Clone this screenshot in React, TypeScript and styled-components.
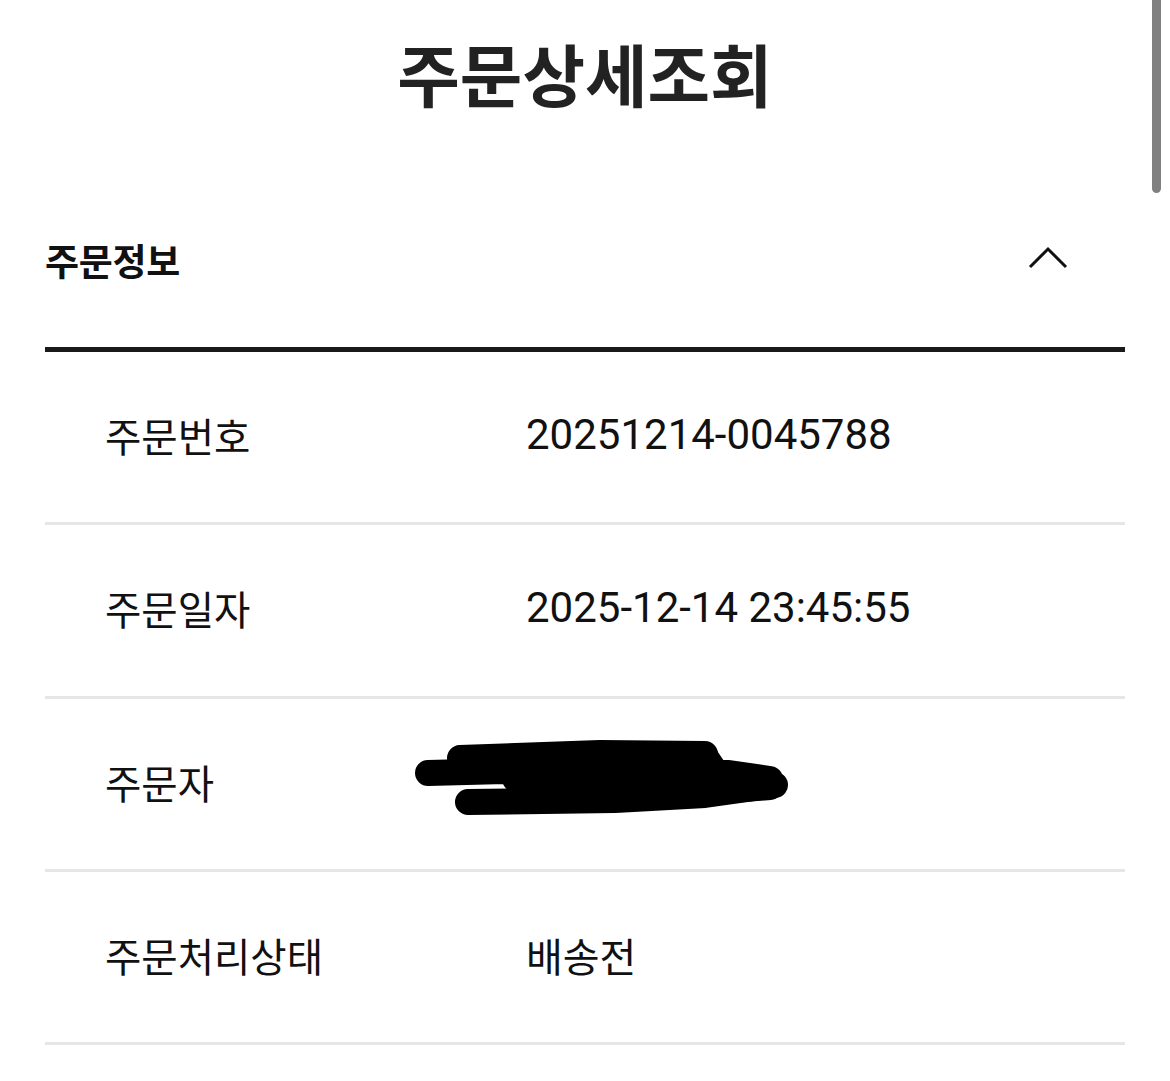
import React from "react";
import styled, { createGlobalStyle } from "styled-components";

const Global = createGlobalStyle`
  html, body { margin: 0; padding: 0; background: #fff; }
  body { font-family: Roboto, "Noto Sans CJK KR", sans-serif; color: #111; }
`;

const Page = styled.div`
  width: 1170px;
  min-height: 1081px;
  position: relative;
  overflow: hidden;
`;

const Title = styled.h1`
  margin: 0;
  padding-top: 27px;
  height: 95px;
  text-align: center;
  font-family: "Noto Sans CJK KR", sans-serif;
  font-weight: 700;
  font-size: 68px;
  line-height: 92px;
  color: #222;
  letter-spacing: 0;
`;

const Content = styled.div`
  padding: 0 45px;
`;

const SectionHeader = styled.div`
  display: flex;
  align-items: center;
  justify-content: space-between;
  height: 230px;
  padding-top: 50px;
  border-bottom: 5px solid #1a1a1a;
  box-sizing: border-box;
`;

const SectionTitle = styled.h2`
  margin: 0;
  font-family: "Noto Sans CJK KR", sans-serif;
  font-weight: 700;
  font-size: 37px;
  color: #111;
  letter-spacing: -0.3px;
`;

const Chevron = styled.svg`
  width: 40px;
  height: 24px;
  margin-right: 57px;
  margin-top: -4px;
`;

const Row = styled.div`
  display: flex;
  align-items: center;
  height: 173.33px;
  border-bottom: 3px solid #e6e6e6;
  box-sizing: border-box;
  padding-left: 60px;
  padding-bottom: 5px;
  position: relative;
`;

const Label = styled.div`
  width: 421px;
  flex: none;
  font-family: "Noto Sans CJK KR", sans-serif;
  font-size: 39.5px;
  color: #111;
`;

const Value = styled.div<{ $numeric?: boolean }>`
  font-family: Roboto, "Noto Sans CJK KR", sans-serif;
  font-size: ${(p) => (p.$numeric ? "42px" : "40px")};
  color: #111;
`;

const Redaction = styled.svg`
  position: absolute;
  left: 370px;
  top: 40px;
  width: 380px;
  height: 80px;
  overflow: visible;
`;

const Scrollbar = styled.div`
  position: absolute;
  top: 0;
  right: 9px;
  width: 9px;
  height: 193px;
  background: #808080;
  border-radius: 0 0 5px 5px;
`;

const rows: { label: string; value?: string; numeric?: boolean; redacted?: boolean }[] = [
  { label: "주문번호", value: "20251214-0045788", numeric: true },
  { label: "주문일자", value: "2025-12-14 23:45:55", numeric: true },
  { label: "주문자", redacted: true },
  { label: "주문처리상태", value: "배송전" },
];

export default function App() {
  return (
    <Page>
      <Global />
      <Title>주문상세조회</Title>
      <Content>
        <SectionHeader>
          <SectionTitle>주문정보</SectionTitle>
          <Chevron viewBox="0 0 40 24">
            <polyline points="2,21 20,3 38,21" fill="none" stroke="#111" strokeWidth="3" />
          </Chevron>
        </SectionHeader>
        {rows.map((r) => (
          <Row key={r.label}>
            <Label>{r.label}</Label>
            <Value $numeric={r.numeric}>{r.value}</Value>
            {r.redacted && (
              <Redaction viewBox="0 0 380 80">
                <g fill="#000" stroke="#000" strokeWidth="26" strokeLinecap="round" strokeLinejoin="round">
                  <path fill="none" d="M13 34 L90 32 L150 37" />
                  <path fill="none" d="M45 19 L185 14 L290 15" />
                  <path fill="none" d="M53 63 L200 61 L290 56 L360 46" />
                  <path d="M130 22 L290 17 L300 32 L355 40 L355 48 L200 60 L130 52 L100 40 Z" />
                </g>
              </Redaction>
            )}
          </Row>
        ))}
      </Content>
      <Scrollbar />
    </Page>
  );
}
